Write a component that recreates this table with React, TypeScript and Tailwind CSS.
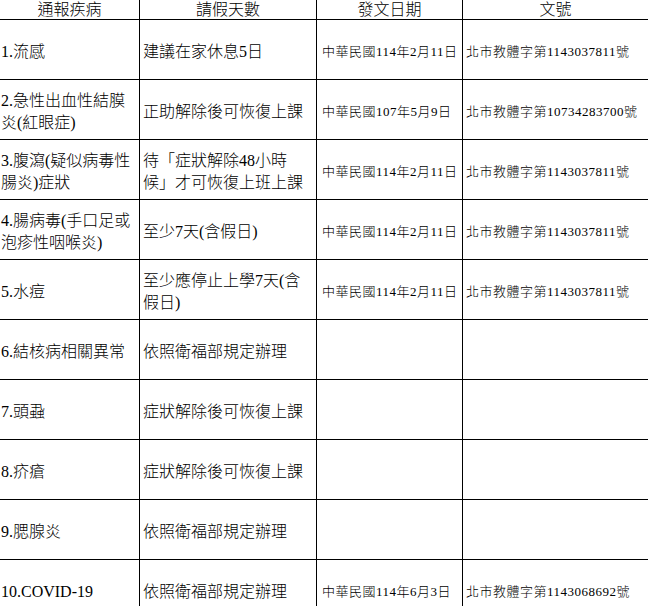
const font = {
  fontFamily: '"Liberation Serif", "Noto Sans CJK TC", serif',
};

type Row = {
  disease: string[];
  leave: string[];
  date?: string;
  doc?: string;
};

const rows: Row[] = [
  { disease: ["1.流感"], leave: ["建議在家休息5日"], date: "中華民國114年2月11日", doc: "北市教體字第1143037811號" },
  { disease: ["2.急性出血性結膜", "炎(紅眼症)"], leave: ["正助解除後可恢復上課"], date: "中華民國107年5月9日", doc: "北市教體字第10734283700號" },
  { disease: ["3.腹瀉(疑似病毒性", "腸炎)症狀"], leave: ["待「症狀解除48小時", "候」才可恢復上班上課"], date: "中華民國114年2月11日", doc: "北市教體字第1143037811號" },
  { disease: ["4.腸病毒(手口足或", "泡疹性咽喉炎)"], leave: ["至少7天(含假日)"], date: "中華民國114年2月11日", doc: "北市教體字第1143037811號" },
  { disease: ["5.水痘"], leave: ["至少應停止上學7天(含", "假日)"], date: "中華民國114年2月11日", doc: "北市教體字第1143037811號" },
  { disease: ["6.結核病相關異常"], leave: ["依照衛福部規定辦理"] },
  { disease: ["7.頭蝨"], leave: ["症狀解除後可恢復上課"] },
  { disease: ["8.疥瘡"], leave: ["症狀解除後可恢復上課"] },
  { disease: ["9.腮腺炎"], leave: ["依照衛福部規定辦理"] },
  { disease: ["10.COVID-19"], leave: ["依照衛福部規定辦理"], date: "中華民國114年6月3日", doc: "北市教體字第1143068692號" },
];

const Lines = ({ lines }: { lines: string[] }) => (
  <div>
    {lines.map((l) => (
      <div key={l} className="whitespace-nowrap">{l}</div>
    ))}
  </div>
);

export default function App() {
  return (
    <div className="h-[615px] w-[648px] bg-white font-light text-black" style={font}>
      <div className="h-[606px] overflow-hidden">
        <div className="grid grid-cols-[140px_177px_146px_185px]">
          {/* header */}
          <div className="flex h-[20px] items-center justify-center border-r border-b border-black text-[16px] leading-[20px]">通報疾病</div>
          <div className="flex h-[20px] items-center justify-center border-r border-b border-black text-[16px] leading-[20px]">請假天數</div>
          <div className="flex h-[20px] items-center justify-center border-r border-b border-black text-[16px] leading-[20px]">發文日期</div>
          <div className="flex h-[20px] items-center justify-center border-b border-black text-[16px] leading-[20px]">文號</div>

          {rows.map((r, i) => (
            <div key={i} className="contents">
              <div className="flex h-[60px] items-center border-r border-b border-black pl-[1px] pt-[5px] text-[16px] leading-[22px]">
                <Lines lines={r.disease} />
              </div>
              <div className="flex h-[60px] items-center border-r border-b border-black pl-[3px] pt-[5px] text-[16px] leading-[22px]">
                <Lines lines={r.leave} />
              </div>
              <div className="flex h-[60px] items-center border-r border-b border-black pl-[5px] pt-[5px] text-[13px] tracking-[0.5px] whitespace-nowrap">
                {r.date ?? ""}
              </div>
              <div className="flex h-[60px] items-center border-b border-black pl-[3px] pt-[5px] text-[13px] tracking-[0.5px] whitespace-nowrap">
                {r.doc ?? ""}
              </div>
            </div>
          ))}
        </div>
      </div>
    </div>
  );
}
